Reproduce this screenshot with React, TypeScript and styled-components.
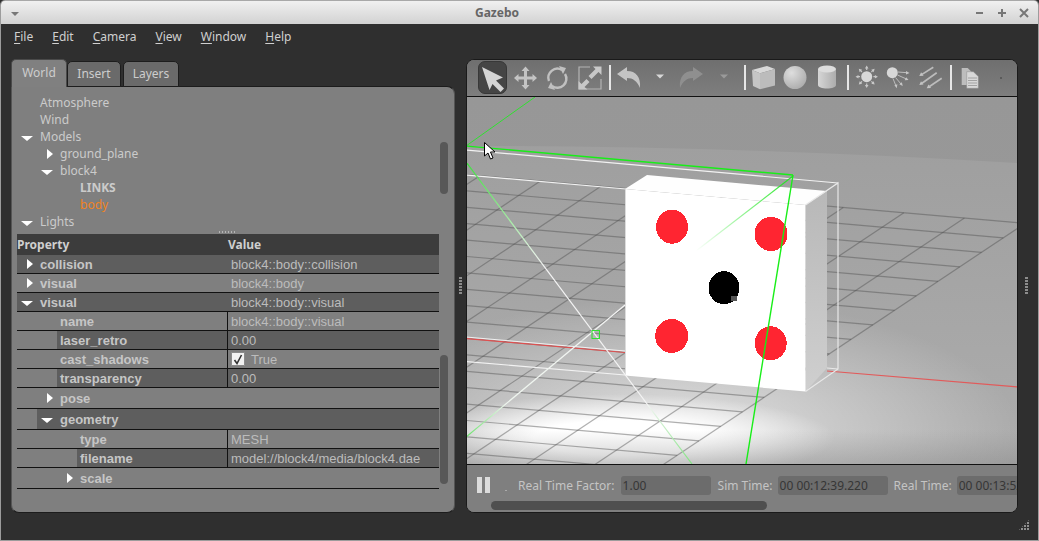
import React from "react";
import styled, { createGlobalStyle } from "styled-components";

const Global = createGlobalStyle`
  html, body { margin: 0; padding: 0; background: #2f2f2f; }
  * { box-sizing: border-box; }
`;

const Win = styled.div`
  width: 1039px; height: 541px; overflow: hidden; position: relative;
  display: flex; flex-direction: column; background: #2f2f2f;
  border: 1px solid #9c9c9c; border-top: 0; border-radius: 5px 5px 0 0;
  font-family: "Noto Sans", sans-serif; font-size: 12px; color: #c8c8c8;
`;
const TitleBar = styled.div`
  height: 24px; flex: none; display: flex; align-items: center;
  margin: 0 -1px; border-top: 1px solid #a8a8a8; border-radius: 5px 5px 0 0;
  background: linear-gradient(#f0f0f0, #d2d2d2);
`;
const WinCaretSlot = styled.div`width: 27px; display: flex; justify-content: center; padding-left: 2px;`;
const WinCaret = styled.div`
  width: 0; height: 0; border-left: 4px solid transparent; border-right: 4px solid transparent;
  border-top: 4px solid #777; margin-top: 2px;
`;
const Title = styled.div`flex: 1; text-align: center; font-weight: 700; color: #666; font-size: 12px;`;
const WinButtons = styled.div`width: 72px; display: flex; padding-left: 2px; svg { display: block; }`;
const Menu = styled.div`
  height: 24px; flex: none; display: flex; align-items: center; padding-left: 13px; gap: 19px; color: #d0d0d0;
  u { text-underline-offset: 2px; }
`;
const Main = styled.div`flex: 1; display: flex; padding: 11px 0 0 10px; align-items: flex-start;`;
const Left = styled.div`width: 444px; height: 454px; display: flex; flex-direction: column; flex: none;`;
const Tabs = styled.div`height: 28px; flex: none; display: flex; align-items: flex-end; position: relative; z-index: 1; margin-bottom: -1px;`;
const Tab = styled.div<{ $active?: boolean; $w: number; $ml?: number }>`
  width: ${p => p.$w}px; height: ${p => (p.$active ? 28 : 26)}px; margin-left: ${p => p.$ml ?? 0}px;
  display: flex; align-items: center; justify-content: center;
  padding-bottom: ${p => (p.$active ? 2 : 1)}px;
  border: 1px solid #1d1d1d; border-bottom: ${p => (p.$active ? "0" : "1px solid #1d1d1d")};
  border-radius: 5px 5px 0 0;
  ${p => p.$active && "border-color: #4a4a4a;"}
  background: ${p => (p.$active ? "#808080" : "#6a6a6a")};
  color: #cdcdcd;
`;
const LeftPanel = styled.div`
  flex: 1; background: #7f7f7f; border: 1px solid #1c1c1c; border-top-color: #1c1c1c;
  border-radius: 0 8px 8px 8px; display: flex; flex-direction: column;
  border-left-color: #555; border-right-color: #555;
`;
const TreeArea = styled.div`height: 144px; flex: none; display: flex; padding-top: 7px;`;
const Tree = styled.div`flex: none; width: 428px;`;
const TreeRow = styled.div<{ $level: number; $bold?: boolean; $sel?: boolean }>`
  height: 17px; display: flex; align-items: center;
  padding-left: ${p => 8 + p.$level * 20}px;
  font-weight: ${p => (p.$bold ? 700 : 400)};
  color: ${p => (p.$sel ? "#f08322" : "#cbcbcb")};
`;
const Slot = styled.div`width: 20px; flex: none; display: flex; justify-content: flex-end; padding-right: 7px;`;
const ArrowDown = styled.div`
  width: 0; height: 0; border-left: 6px solid transparent; border-right: 6px solid transparent; border-top: 5px solid #fff; margin-top: 3px;
`;
const ArrowRight = styled.div`
  width: 0; height: 0; border-top: 5px solid transparent; border-bottom: 5px solid transparent; border-left: 6px solid #fff;
`;
const Thumb = styled.div<{ $top: number; $h: number }>`
  width: 8px; flex: none; margin-top: ${p => p.$top}px; height: ${p => p.$h}px; background: #585858; border-radius: 4px;
`;
const SplitRow = styled.div`height: 3px; flex: none; display: flex; justify-content: center; padding-right: 12px;`;
const HGrip = styled.div`width: 17px; height: 2px; background: repeating-linear-gradient(90deg, #b5b5b5 0 1px, transparent 1px 3px);`;
const TableArea = styled.div`flex: 1; display: flex; padding-left: 5px; gap: 1px;`;
const Table = styled.div`width: 422px; flex: none; font-family: "Liberation Sans", sans-serif; font-size: 13px;`;
const Head = styled.div`
  height: 21px; background: #3c3c3c; display: grid; grid-template-columns: 211px 1fr; align-items: center;
  font-family: "Noto Sans", sans-serif; font-weight: 700; font-size: 12px; color: #cfcfcf;
`;
const Row = styled.div<{ $h: number }>`
  height: ${p => p.$h}px; display: flex; border-bottom: 1px solid #111;
`;
const NameCell = styled.div<{ $group?: boolean }>`
  width: ${p => (p.$group ? "100%" : "210px")}; flex: none; display: flex;
`;
const Spacer = styled.div<{ $w: number }>`width: ${p => p.$w}px; flex: none;`;
const NameLabel = styled.div<{ $dark?: boolean }>`
  flex: 1; display: flex; align-items: center; padding-left: 3px; font-weight: 700; color: #c6c6c6;
  background: ${p => (p.$dark ? "#5e5e5e" : "transparent")};
`;
const ValueCell = styled.div<{ $dark?: boolean; $line?: boolean }>`
  flex: 1; display: flex; align-items: center; padding-left: 3px; color: #bcbcbc;
  border-left: 1px solid ${p => (p.$line ? "#111" : "transparent")};
  background: ${p => (p.$dark ? "#5e5e5e" : "transparent")};
`;
const Check = styled.div`
  width: 14px; height: 14px; background: #f2f2f2; border: 1px solid #8a8a8a; border-radius: 1px; margin-right: 6px;
  display: flex; align-items: center; justify-content: center;
`;
const VGrip = styled.div<{ $w: number }>`
  width: ${p => p.$w}px; height: 454px; flex: none; display: flex; align-items: center; justify-content: center;
  &::after { content: ""; width: 3px; height: 18px; background: repeating-linear-gradient(#8c8c8c 0 2px, transparent 2px 3px); }
`;
const Right = styled.div`
  width: 552px; height: 454px; flex: none; display: flex; flex-direction: column; overflow: hidden;
  border: 1px solid #1a1a1a; border-radius: 8px; background: #7f7f7f;
`;
const Toolbar = styled.div`
  height: 37px; flex: none; display: flex; padding-left: 10px; border-bottom: 1px solid #111;
  background: linear-gradient(#6f6f6f, #7e7e7e);
`;
const ToolBtn = styled.div<{ $active?: boolean }>`
  width: 32px; height: 36px; flex: none; position: relative;
  ${p => p.$active && `&::before { content: ""; position: absolute; left: 1px; right: 2px; top: 1px; bottom: 2px; background: #454545; border: 1px solid #383838; border-radius: 7px; }`}
  svg { display: block; position: relative; }
`;
const Sep = styled.div`width: 2px; height: 25px; margin: 5px 1px 0 4px; background: #e6e6e6; flex: none;`;
const Scene = styled.div`height: 367px; flex: none; position: relative; overflow: hidden; background: #999; svg { display: block; }`;
const BottomBar = styled.div`
  flex: 1; border-top: 1px solid #111; display: flex; flex-direction: column; background: #7f7f7f; overflow: hidden;
`;
const StatusRow = styled.div`height: 35px; flex: none; display: flex; align-items: flex-end; padding: 0 0 5px 10px; white-space: nowrap; color: #c4c4c4;`;
const PauseBtn = styled.div`width: 13px; height: 16px; flex: none; display: flex; justify-content: space-between; margin-bottom: 2px;`;
const PauseBar = styled.div`width: 5px; background: #dcdcdc;`;
const Dot = styled.div`width: 2px; height: 1px; background: #aaa; margin: 0 11px 4px 15px; flex: none;`;
const StatLabel = styled.div`height: 19px; line-height: 19px; flex: none;`;
const Field = styled.div<{ $w: number; $ml: number; $mr: number }>`
  width: ${p => p.$w}px; margin: 0 ${p => p.$mr}px 0 ${p => p.$ml}px; height: 19px; line-height: 19px; flex: none; padding-left: 2px; overflow: hidden;
  background: #6c6c6c; color: #363636; border-radius: 3px;
`;
const HScroll = styled.div`height: 9px; width: 276px; margin: 1px 0 0 24px; background: #4f4f4f; border-radius: 5px; flex: none;`;
const ResizeGrip = styled.div`
  position: absolute; right: 8px; bottom: 9px; width: 12px; height: 12px;
  background: repeating-linear-gradient(90deg, #8f8f8f 0 2px, transparent 2px 3px);
  clip-path: polygon(100% 0, 100% 100%, 0 100%);
  mask: repeating-linear-gradient(#000 0 2px, transparent 2px 3px);
`;
const Cursor = styled.svg`position: absolute; left: 482px; top: 141px; z-index: 3;`;

const Icon: React.FC<{ children: React.ReactNode }> = ({ children }) => (
  <svg width="32" height="36" viewBox="0 0 32 36">{children}</svg>
);
const Caret = ({ c }: { c: string }) => (
  <Icon><path d="M12 14.5h8l-4 4z" fill={c} /></Icon>
);

const M = 0.0875, DM = 0.667, EDGE = 907;
const hStarts: number[] = [];
for (let i = 0; i < 19; i++) hStarts.push(206 + i * 16.4);
const diag: number[] = [];
for (let c = EDGE; c > 400; c -= 45.7) diag.push(c);

const SceneArt = () => (
  <svg width="550" height="367" viewBox="467 97 550 367">
    <defs>
      <linearGradient id="sky" x1="0" y1="0" x2="0" y2="1">
        <stop offset="0" stopColor="#979797" /><stop offset="1" stopColor="#9b9b9b" />
      </linearGradient>
      <linearGradient id="ground" x1="0" y1="0" x2="0" y2="1">
        <stop offset="0" stopColor="#9f9f9f" /><stop offset="1" stopColor="#adadad" />
      </linearGradient>
      <radialGradient id="spot" gradientUnits="userSpaceOnUse" cx="0" cy="0" r="1" gradientTransform="translate(620 438) scale(215 44)">
        <stop offset="0" stopColor="#fff" /><stop offset=".4" stopColor="#fff" /><stop offset="1" stopColor="#fff" stopOpacity="0" />
      </radialGradient>
      <radialGradient id="glow" gradientUnits="userSpaceOnUse" cx="0" cy="0" r="1" gradientTransform="translate(680 432) scale(340 135)">
        <stop offset="0" stopColor="#fff" stopOpacity=".65" /><stop offset="1" stopColor="#fff" stopOpacity="0" />
      </radialGradient>
      <linearGradient id="floorFade" x1="0" y1="0" x2="0" y2="1">
        <stop offset="0" stopColor="#888" stopOpacity="0" /><stop offset="1" stopColor="#808080" stopOpacity=".55" />
      </linearGradient>
      <linearGradient id="side" x1="0" y1="0" x2="0" y2="1">
        <stop offset="0" stopColor="#b8b8b8" /><stop offset="1" stopColor="#cfcfcf" />
      </linearGradient>
      <linearGradient id="whiteGreen" gradientUnits="userSpaceOnUse" x1="466" y1="162" x2="692" y2="464">
        <stop offset="0" stopColor="#37e437" /><stop offset=".28" stopColor="#d7f0d7" /><stop offset=".35" stopColor="#f4f4f4" /><stop offset=".8" stopColor="#f4f4f4" /><stop offset="1" stopColor="#7fe47f" />
      </linearGradient>
      <linearGradient id="whiteGreen2" gradientUnits="userSpaceOnUse" x1="466" y1="437" x2="625" y2="305">
        <stop offset="0" stopColor="#66e266" /><stop offset=".25" stopColor="#eef5ee" /><stop offset="1" stopColor="#f4f4f4" />
      </linearGradient>
      <linearGradient id="fadeGreen" gradientUnits="userSpaceOnUse" x1="793" y1="176" x2="696" y2="251">
        <stop offset="0" stopColor="#22e622" /><stop offset="1" stopColor="#22e622" stopOpacity="0" />
      </linearGradient>
    </defs>
    <rect x="466" y="97" width="553" height="367" fill="url(#sky)" />
    <path d="M466 146 Q740 146 1018 163 V464 H466 Z" fill="url(#ground)" />
    <rect x="466" y="297" width="553" height="167" fill="url(#glow)" />
    <rect x="466" y="394" width="553" height="70" fill="url(#spot)" />
    <rect x="466" y="430" width="553" height="34" fill="url(#floorFade)" opacity=".7" />
    <g stroke="#505050" strokeOpacity=".45" strokeWidth="1.2" fill="none">
      {hStarts.map(y0 => {
        const xe = (EDGE - y0 + M * 827) / (M + DM);
        return <line key={y0} x1={466} y1={y0 + M * (466 - 827)} x2={xe} y2={y0 + M * (xe - 827)} />;
      })}
      {diag.map(c => {
        const xs = (c - 206 + M * 827) / (M + DM);
        return <line key={c} x1={xs} y1={c - DM * xs} x2={xs - 600} y2={c - DM * (xs - 600)} />;
      })}
    </g>
    <line x1="466" y1="338.5" x2="625" y2="352.5" stroke="#e05050" strokeWidth="1.2" />
    <line x1="466" y1="337" x2="625" y2="351" stroke="#f0f0f0" strokeWidth="1" />
    <line x1="827" y1="371" x2="1018" y2="387" stroke="#e25a5a" strokeWidth="1.2" />
    <line x1="466" y1="150" x2="838" y2="183" stroke="#f2f2f2" strokeWidth="1.2" />
    <line x1="466" y1="175" x2="626" y2="189" stroke="#f2f2f2" strokeWidth="1.2" />
    <line x1="466" y1="361.5" x2="625" y2="375" stroke="#f2f2f2" strokeWidth="1.2" />
    <polygon points="805.5,205 827,191 827,368 805.5,391.5" fill="url(#side)" />
    <polygon points="625,189 647,175 827,191 805.5,205" fill="#fefefe" />
    <polygon points="625,189 805.5,205 805.5,391.5 625,375.5" fill="#fff" />
    <line x1="625.5" y1="189" x2="625.5" y2="375" stroke="#dcdcdc" strokeWidth="1" />
    <g shapeRendering="crispEdges">
      <ellipse cx="672" cy="226.7" rx="16" ry="17" fill="#ff2531" />
      <ellipse cx="771" cy="234" rx="16.5" ry="17" fill="#ff2531" />
      <ellipse cx="724" cy="287.7" rx="15.5" ry="16.5" fill="#000" />
      <rect x="731" y="296" width="6" height="5" fill="#555" />
      <ellipse cx="671.7" cy="336" rx="16.5" ry="17" fill="#ff2531" />
      <ellipse cx="770.7" cy="343.3" rx="16" ry="17" fill="#ff2531" />
    </g>
    <polyline points="805.5,205 838,183 838,369 805.5,391.5" fill="none" stroke="#e8e8e8" strokeWidth="1.2" />
    <line x1="827" y1="368" x2="838" y2="369" stroke="#e8e8e8" strokeWidth="1.2" />
    <line x1="466" y1="162" x2="692" y2="464" stroke="url(#whiteGreen)" strokeWidth="1.2" />
    <line x1="466" y1="437" x2="625" y2="305" stroke="url(#whiteGreen2)" strokeWidth="1.2" />
    <line x1="793" y1="176" x2="696" y2="251" stroke="url(#fadeGreen)" strokeWidth="1.2" />
    <line x1="466" y1="146" x2="535" y2="97" stroke="#2fe22f" strokeWidth="1" />
    <line x1="466" y1="146" x2="793" y2="175" stroke="#18ee18" strokeWidth="1.4" />
    <line x1="793" y1="175" x2="746" y2="464" stroke="#18ee18" strokeWidth="1.4" />
    <rect x="592" y="330.5" width="7.5" height="8" fill="none" stroke="#2fe22f" strokeWidth="1" />
  </svg>
);

type R = { name: string; val?: string; level: number; dark?: boolean; arrow?: "r" | "d"; group?: boolean; check?: boolean; line?: boolean };
const rows: R[] = [
  { name: "collision", val: "block4::body::collision", level: 0, dark: true, arrow: "r" },
  { name: "visual", val: "block4::body", level: 0, arrow: "r" },
  { name: "visual", val: "block4::body::visual", level: 0, dark: true, arrow: "d" },
  { name: "name", val: "block4::body::visual", level: 2, line: true },
  { name: "laser_retro", val: "0.00", level: 2, dark: true, line: true },
  { name: "cast_shadows", val: "True", level: 2, check: true, line: true },
  { name: "transparency", val: "0.00", level: 2, dark: true, line: true },
  { name: "pose", level: 1, arrow: "r", group: true },
  { name: "geometry", level: 1, dark: true, arrow: "d", group: true },
  { name: "type", val: "MESH", level: 3, line: true },
  { name: "filename", val: "model://block4/media/block4.dae", level: 3, dark: true, line: true },
  { name: "scale", level: 2, arrow: "r", group: true },
];

const tree = [
  { t: "Atmosphere", l: 0 },
  { t: "Wind", l: 0 },
  { t: "Models", l: 0, a: "d" },
  { t: "ground_plane", l: 1, a: "r" },
  { t: "block4", l: 1, a: "d" },
  { t: "LINKS", l: 2, bold: true },
  { t: "body", l: 2, sel: true },
  { t: "Lights", l: 0, a: "d" },
];

const Arrow = ({ a }: { a?: string }) => (
  <Slot>{a === "d" ? <ArrowDown /> : a === "r" ? <ArrowRight /> : null}</Slot>
);

export default function App() {
  return (
    <Win>
      <Global />
      <TitleBar>
        <WinCaretSlot><WinCaret /></WinCaretSlot>
        <Title>Gazebo</Title>
        <WinButtons>
          <svg width="22" height="14" viewBox="0 0 22 14"><path d="M7 7h7" stroke="#777" strokeWidth="2" /></svg>
          <svg width="22" height="14" viewBox="0 0 22 14"><path d="M7 7h8M11 3v8" stroke="#777" strokeWidth="2" /></svg>
          <svg width="22" height="14" viewBox="0 0 22 14"><path d="M7 3l8 8M15 3l-8 8" stroke="#777" strokeWidth="2" /></svg>
        </WinButtons>
      </TitleBar>
      <Menu>
        <span><u>F</u>ile</span><span><u>E</u>dit</span><span><u>C</u>amera</span>
        <span><u>V</u>iew</span><span><u>W</u>indow</span><span><u>H</u>elp</span>
      </Menu>
      <Main>
        <Left>
          <Tabs>
            <Tab $active $w={56}>World</Tab>
            <Tab $w={54}>Insert</Tab>
            <Tab $w={56} $ml={2}>Layers</Tab>
          </Tabs>
          <LeftPanel>
            <TreeArea>
              <Tree>
                {tree.map(r => (
                  <TreeRow key={r.t} $level={r.l} $bold={r.bold} $sel={r.sel}>
                    <Arrow a={r.a} /><span>{r.t}</span>
                  </TreeRow>
                ))}
              </Tree>
              <Thumb $top={48} $h={52} />
            </TreeArea>
            <SplitRow><HGrip /></SplitRow>
            <TableArea>
              <Table>
                <Head><span>Property</span><span>Value</span></Head>
                {rows.map((r, i) => (
                  <Row key={i} $h={r.group ? 21 : 19}>
                    <NameCell $group={r.group}>
                      <Spacer $w={r.level * 20} />
                      <NameLabel $dark={r.dark}>
                        {r.arrow && <Arrow a={r.arrow} />}
                        <span>{r.name}</span>
                      </NameLabel>
                    </NameCell>
                    {!r.group && (
                      <ValueCell $dark={r.dark} $line={r.line}>
                        {r.check && (
                          <Check>
                            <svg width="10" height="11" viewBox="0 0 10 11"><path d="M1.5 6l2.5 3.5L8.5 1" fill="none" stroke="#333" strokeWidth="1.6" /></svg>
                          </Check>
                        )}
                        {r.val}
                      </ValueCell>
                    )}
                  </Row>
                ))}
              </Table>
              <Thumb $top={121} $h={129} />
            </TableArea>
          </LeftPanel>
        </Left>
        <VGrip $w={11} />
        <Right>
          <Toolbar>
            <ToolBtn $active><Icon><path d="M5 7L26 17.5 19 20.5 27 28.5 23.5 32 15.5 24 12.5 30Z" fill="#d4d4d4" /></Icon></ToolBtn>
            <ToolBtn><Icon><path d="M16.5 6.5l4 4.5h-2.5v5.5h5.5V14l4.5 4-4.5 4v-2.5h-5.5v5.5h2.5l-4 4.5-4-4.5h2.5v-5.5h-5.5V22l-4.5-4 4.5-4v2.5h5.5V11h-2.5z" fill="#c4c4c4" /></Icon></ToolBtn>
            <ToolBtn><Icon><path d="M8 21a9 9 0 0 1 13-11M24 14a9 9 0 0 1-13 12" fill="none" stroke="#c0c0c0" strokeWidth="2.4" /><path d="M18 6l7 2-3 6zM14 30l-7-2 3-6z" fill="#c0c0c0" /></Icon></ToolBtn>
            <ToolBtn><Icon><path d="M17 7H6v22h22V19" fill="none" stroke="#b4b4b4" strokeWidth="1.2" /><path d="M20 6.5h8.500V15l-3-3-7 7-3-3 7-7zM5.500 29.500v-8.500l3 3 5-5 3 3-5 5 3 2.500z" fill="#c8c8c8" /></Icon></ToolBtn>
            <Sep />
            <ToolBtn><Icon><path d="M5 14L15 7V11C24 11 29 17 28 28 25 21 21 18 15 18V21Z" fill="#c4c4c4" /></Icon></ToolBtn>
            <ToolBtn><Caret c="#d8d8d8" /></ToolBtn>
            <ToolBtn><Icon><path d="M27 14L17 7V11C8 11 3 17 4 28 7 21 11 18 17 18V21Z" fill="#8f8f8f" /></Icon></ToolBtn>
            <ToolBtn><Caret c="#9a9a9a" /></ToolBtn>
            <Sep />
            <ToolBtn><Icon><path d="M5 10L20 6 28 9 13 13.300z" fill="#d8d8d8" /><path d="M5 10L13 13.300V29.300L6 26z" fill="#c6c6c6" /><path d="M13 13.300L28 9V25.500L13 29.300z" fill="#bcbcbc" /></Icon></ToolBtn>
            <ToolBtn>
              <Icon>
                <defs><radialGradient id="sph" cx=".35" cy=".3" r=".8"><stop offset="0" stopColor="#dedede" /><stop offset="1" stopColor="#a9a9a9" /></radialGradient></defs>
                <circle cx="16" cy="17.5" r="11.5" fill="url(#sph)" />
              </Icon>
            </ToolBtn>
            <ToolBtn>
              <Icon>
                <defs><linearGradient id="cyl" x1="0" x2="1" y1="0" y2="0"><stop offset="0" stopColor="#d6d6d6" /><stop offset="1" stopColor="#acacac" /></linearGradient></defs>
                <path d="M7 9v16c0 2 4 3.500 9 3.500s9-1.500 9-3.500V9z" fill="url(#cyl)" />
                <ellipse cx="16" cy="9" rx="9" ry="3.5" fill="#dcdcdc" />
              </Icon>
            </ToolBtn>
            <Sep />
            <ToolBtn>
              <Icon>
                <circle cx="16.700" cy="16.700" r="5.500" fill="#d8d8d8" />
                {[0, 45, 90, 135, 180, 225, 270, 315].map(a => (
                  <path key={a} transform={`rotate(${a} 16.700 16.700)`} d="M16.700 5.500l1.800 3h-1.200v1.500h-1.200V8.500h-1.200z" fill="#c8c8c8" />
                ))}
              </Icon>
            </ToolBtn>
            <ToolBtn>
              <Icon>
                <circle cx="10.300" cy="12.700" r="5.500" fill="#d8d8d8" />
                <g fill="none" stroke="#bdbdbd" strokeWidth="1">
                  <path d="M16 12l9 .700M15.500 15l8.500 3.800M13.500 17.500l5.500 6.500M11 18.500l3 7.500" />
                </g>
                <g fill="#c6c6c6">
                  <path d="M27.500 12.900l-3.500 1.600V11z" />
                  <path d="M26.500 20l-3.800.200 1.500-3z" />
                  <path d="M20.700 26l-3.400-1.700 2.600-2z" />
                  <path d="M14.700 28.300l-2.300-3 3-1z" />
                </g>
              </Icon>
            </ToolBtn>
            <ToolBtn>
              <Icon>
                <g fill="none" stroke="#bcbcbc" strokeWidth="1.700">
                  <path d="M19.300 7.300L8 14.400" />
                  <path d="M22.700 12.700L8 23.200" />
                  <path d="M27.700 18.300L15.500 26.500" />
                </g>
                <g fill="#c4c4c4">
                  <path d="M5.300 16l1.800-3.800 2.500 3.500z" />
                  <path d="M5.300 25l1.700-3.800 2.500 3.400z" />
                  <path d="M12.700 28.300l1.800-3.800 2.500 3.400z" />
                </g>
              </Icon>
            </ToolBtn>
            <Sep />
            <ToolBtn>
              <Icon>
                <path d="M8.700 8h6l4 4v13h-10z" fill="#bdbdbd" />
                <path d="M13.700 11.700h6.600l5 4.700v11.900H13.700z" fill="#d8d8d8" stroke="#8f8f8f" strokeWidth=".5" />
                <path d="M15 18h9M15 20.500h9M15 23h9M15 25.500h9" stroke="#a2a2a2" strokeWidth="1" />
              </Icon>
            </ToolBtn>
            <ToolBtn><Icon><rect x="15" y="17" width="2" height="2" fill="#5a5a5a" /></Icon></ToolBtn>
          </Toolbar>
          <Scene><SceneArt /></Scene>
          <BottomBar>
            <StatusRow>
              <PauseBtn><PauseBar /><PauseBar /></PauseBtn>
              <Dot />
              <StatLabel>Real Time Factor:</StatLabel>
              <Field $w={90} $ml={6} $mr={7}>1.00</Field>
              <StatLabel>Sim Time:</StatLabel>
              <Field $w={110} $ml={5} $mr={6}>00 00:12:39.220</Field>
              <StatLabel>Real Time:</StatLabel>
              <Field $w={110} $ml={5} $mr={6}>00 00:13:52.410</Field>
            </StatusRow>
            <HScroll />
          </BottomBar>
        </Right>
        <VGrip $w={16} />
      </Main>
      <ResizeGrip />
      <Cursor width="14" height="20" viewBox="0 0 14 20">
        <path d="M1.500 1.500V15l3.500-3 2.500 6 2.500-1-2.500-6h4.500z" fill="#fff" stroke="#000" strokeWidth="1" />
      </Cursor>
    </Win>
  );
}
